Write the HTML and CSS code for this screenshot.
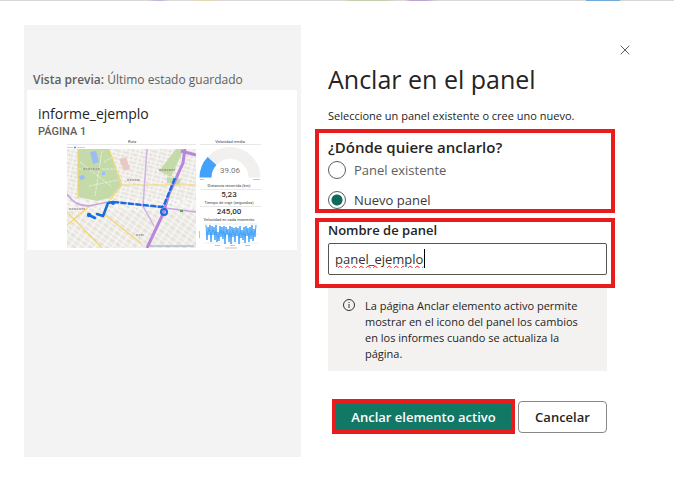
FILE: index.html
```html
<!DOCTYPE html>
<html lang="es">
<head>
<meta charset="utf-8">
<title>Anclar en el panel</title>
<link rel="stylesheet" href="styles.css">
</head>
<body>
<div class="backdrop"></div>
<main class="dialog">
  <section class="preview">
    <p class="preview-label"><strong>Vista previa:</strong> Último estado guardado</p>
    <article class="card">
      <h2 class="card-title">informe_ejemplo</h2>
      <p class="card-page">PÁGINA 1</p>
      <svg class="report" viewBox="0 0 194 110" role="img" aria-label="Informe">
        <defs><clipPath id="map"><rect y="10" width="129" height="99"/></clipPath>
        <pattern id="streets" width="9" height="8" patternUnits="userSpaceOnUse" patternTransform="rotate(14)">
          <path d="M0 1H9M2 0V8M0 5H9M6 1V5" stroke="#fff" stroke-width=".8" fill="none"/><path d="M3 3h2M7 6.500v1" stroke="#cdc8c1" stroke-width=".6"/>
        </pattern>
        <pattern id="streets2" width="7" height="9" patternUnits="userSpaceOnUse" patternTransform="rotate(35)">
          <path d="M0 1H7M1 0V9M0 6H7" stroke="#fff" stroke-width=".8" fill="none"/><path d="M3 3h2" stroke="#d3cec6" stroke-width=".6"/>
        </pattern></defs>
        <text class="tiny" x="65" y="4" text-anchor="middle">Ruta</text>
        <path d="M0 5.500H129M133 5.500H194M133 50.500H194M133 67.500H194" stroke="#e8e8e8"/>
        <path d="M0 8.500h6M10 8.500h8" stroke="#bbb" stroke-width=".7"/><circle cx="8" cy="8.500" r="1" fill="#2f96f3"/>
        <g clip-path="url(#map)" fill="none">
          <rect y="10" width="129" height="99" fill="#e9e6e0"/>
          <rect y="10" width="129" height="62" fill="url(#streets)"/>
          <rect y="60" width="129" height="49" fill="url(#streets2)"/>
          <path d="M11 10H42L54 46 43 59 30 62 11 58z" fill="#c4dba9"/>
          <path d="M109 10h8L104 38 92 32zM100 38l14 2-2 6-12-2z" fill="#c4dba9"/>
          <path d="M23 13l6-1 3 11-6 2zM12 37l5-1 1 4-5 1zM35 33h3v3h-3z" fill="#9bbdf1"/>
          <path d="M11 30H50M22 47l29-6M35 12l-7 45M13 23l32 25M46 18l-9 5" stroke="#edf3e5" stroke-width=".8" stroke-dasharray="3 1"/>
          <path d="M11 10V59M42 10l13 36-13 16-5 16M55 46h74M0 73l35 36M38 76l37 29M0 86l24-20" stroke="#f4d66c" stroke-width="1.200"/>
          <path d="M80 10l-4 57 11 20" stroke="#d0b1e8" stroke-width="1.500"/>
          <path d="M0 55q10 15 27 11t25-3l77 10" stroke="#c8a4e5" stroke-width="1.600"/>
          <path d="M118 10l-2 14-14 31-6 20-16 34M114 12l15 4" stroke="#b786dc" stroke-width="3"/>
          <path d="M16 30h17M92 31h16M60 41h13M2 70h16M69 96h8" stroke="#8c7770" stroke-width="1.200" stroke-dasharray="2 .5"/>
          <path d="M52 20l7-2 4 12-6 2z" fill="#e8c9c6"/>
          <rect x="113" y="71" width="3" height="2" fill="#58a557"/>
          <path d="M22 76l6 3M30 75l6 2 5-13 5-1" stroke="#156edc" stroke-width="2.600" stroke-linecap="round" stroke-linejoin="round"/>
          <path d="M46 63l49 5 2-2 11-27" stroke="#156edc" stroke-width="2.400" stroke-dasharray="6 1.500"/>
          <circle cx="22" cy="76" r="2.200" fill="#156edc"/><circle cx="46" cy="64" r="2" fill="#156edc"/>
          <circle cx="97" cy="73" r="3" stroke="#156edc" stroke-width="2"/>
          <path d="M82 107h45" stroke="#94a6c6" stroke-width="1"/>
        </g>
        <g text-anchor="middle">
          <text class="tiny" x="163" y="4">Velocidad media</text>
          <path d="M138.500 38.500a24.500 24.500 0 0 1 49 0" fill="none" stroke="#f1f0ee" stroke-width="12"/>
          <path d="M138.500 38.500a24.500 24.500 0 0 1 6.500-16.500" fill="none" stroke="#42a2fb" stroke-width="12"/>
          <text class="gauge" x="163" y="34">39.06</text>
          <path d="M133 40.500h4M186 40.500h7" stroke="#aaa" stroke-width=".7"/>
          <text class="tiny" x="162" y="48">Distancia recorrida (km)</text>
          <text class="value" x="162" y="58">5,23</text>
          <text class="tiny" x="162" y="65">Tiempo de viaje (segundos)</text>
          <text class="value" x="162" y="75">245,00</text>
          <text class="tiny" x="162" y="82">Velocidad en cada momento</text>
        </g>
        <path d="M137 85h54M137 95h54M137 104h54" stroke="#ddd" stroke-width=".5"/>
        <path d="M139 86l1 15 1-13 1 8 1-10 1 17 1-16 1 9 1-8 1 13 1-15 1 17 1-10 1 9 1-15 1 11 1-10 1 12 1-13 1 18 1-17 1 8 1-6 1 13 1-16 1 18 1-17 1 10 1-9 1 14 1-15 1 9 1-8 1 16 1-18 1 12 1-8 1 10 1-13 1 16 1-17 1 10 1-8 1 14 1-15 1 12 1-14 1 16 1-12 1 8 1-12" fill="none" stroke="#42a2fb" stroke-width="1"/>
        <path d="M148 106.500h5M163 106.500h5M178 106.500h5M158 109h12M132.500 92v7" stroke="#aaa" stroke-width=".7"/>
      </svg>
    </article>
  </section>
  <form class="options">
    <button class="close" type="button" aria-label="Cerrar"><svg viewBox="0 0 10 10"><path d="M.7.700 9.300 9.300M9.300.700.700 9.300"/></svg></button>
    <h1 class="title">Anclar en el panel</h1>
    <p class="intro">Seleccione un panel existente o cree uno nuevo.</p>
    <fieldset class="marked where">
      <legend class="where-title">¿Dónde quiere anclarlo?</legend>
      <label class="choice"><input type="radio" name="destino"><span>Panel existente</span></label>
      <label class="choice"><input type="radio" name="destino" checked><span>Nuevo panel</span></label>
    </fieldset>
    <div class="marked name">
      <label class="name-label" for="nombre">Nombre de panel</label>
      <div class="field"><input id="nombre" type="text" value="panel_ejemplo"><span class="caret"></span></div>
    </div>
    <div class="note">
      <svg class="info" viewBox="0 0 14 14"><circle cx="7" cy="7" r="5.500"/><path d="M7 6v4M7 4v1"/></svg>
      <p>La página Anclar elemento activo permite mostrar en el icono del panel los cambios en los informes cuando se actualiza la página.</p>
    </div>
    <div class="actions">
      <button class="primary" type="submit">Anclar elemento activo</button>
      <button class="secondary" type="button">Cancelar</button>
    </div>
  </form>
</main>
</body>
</html>
```
FILE: styles.css
```css
* { box-sizing: border-box; }
body { margin: 0; background: #fff; color: #252423; font-family: "Open Sans", "Noto Sans", sans-serif; font-size: 13px; }
p, h1, h2 { margin: 0; font-weight: 400; }
button, input { font: inherit; }
.backdrop { height: 1px; background: linear-gradient(90deg, #d8d8d5 0 22%, #c9b5d8 23% 24%, #dcdcda 25% 28%, #e3d7b5 30% 31%, #d9d9d7 33% 51%, #c3cfaf 52% 57%, #d9d9d7 59% 60%, #bda3d2 61% 63%, #d9d9d7 65% 87%, #74a9dc 87% 92%, #d6d6d6 92%); }
.dialog { display: grid; grid-template-columns: 277fr 300fr; gap: 14px; padding: 24px 59px 22px 24px; }
.preview { background: #f3f3f3; padding: 44px 4px 0 3px; }
.preview-label { padding-left: 6px; font-size: 12px; line-height: 21px; color: #605e5c; }
.preview-label strong { font-weight: 600; }
.card { background: #fff; height: 160px; padding: 14px 37px 0 11px; }
.card-title { font-size: 14px; line-height: 20px; }
.card-page { font-family: Roboto, sans-serif; font-size: 11px; font-weight: 500; line-height: 15px; color: #605e5c; }
.report { display: block; width: calc(100% - 28px); margin-left: 29px; overflow: visible; font-family: Roboto, sans-serif; }
.tiny { font-size: 4px; fill: #444; }
.gauge { font-size: 8px; fill: #777; }
.value { font-size: 8px; font-weight: 500; fill: #333; }
.options { display: flex; flex-direction: column; padding-top: 20px; min-height: 432px; }
.close { align-self: flex-end; width: 10px; height: 10px; padding: 0; border: 0; background: none; margin-right: -15px; }
.close svg { display: block; width: 10px; height: 10px; stroke: #605e5c; fill: none; }
.title { padding-left: 13px; margin-top: 8px; font-size: 25px; line-height: 32px; }
.intro { padding-left: 13px; margin-top: 11px; font-size: 11px; line-height: 20px; }
.marked { margin: 0; border: 4px solid #e81c1c; padding: 0 4px 0 9px; }
.where { height: 84px; margin-top: 3px; min-width: 0; }
.where-title { float: left; width: 100%; padding: 0; font-size: 15px; font-weight: 600; line-height: 28px; }
.choice { clear: both; display: flex; align-items: center; gap: 8px; height: 18px; margin-bottom: 12px; color: #605e5c; }
.choice input { appearance: none; width: 18px; height: 18px; margin: 0; border: 1px solid #605e5c; border-radius: 50%; }
.choice input:checked { background: radial-gradient(circle, #0b6a58 5px, #fff 6px); }
.choice input:checked + span { color: #3b3a39; }
.name { height: 70px; margin-top: 5px; }
.name-label { display: block; font-weight: 600; line-height: 17px; margin-bottom: 4px; }
.field { position: relative; }
.field input { display: block; width: 100%; height: 32px; padding: 0 6px; border: 1px solid #555; border-radius: 2px; color: #323130; text-decoration: underline wavy #e81c1c 1px; }
.caret { position: absolute; left: 96px; top: 6px; width: 1px; height: 19px; background: #000; }
.note { display: flex; gap: 9px; margin: 0 8px 0 13px; padding: 10px 14px 9px; background: #f3f2f1; font-size: 11px; line-height: 16px; }
.note p { flex: 1; }
.info { flex: none; width: 14px; height: 14px; stroke: #323130; fill: none; }
.actions { display: flex; align-items: center; gap: 3px; margin: 28px 8px 0 17px; }
.primary { flex: 1; height: 35px; padding: 0; border: 4px solid #e81c1c; background: #117865; color: #fff; font-weight: 600; white-space: nowrap; }
.secondary { width: 89px; height: 32px; padding: 0; border: 1px solid #8a8886; border-radius: 4px; background: #fff; color: #252423; font-weight: 600; }
```
